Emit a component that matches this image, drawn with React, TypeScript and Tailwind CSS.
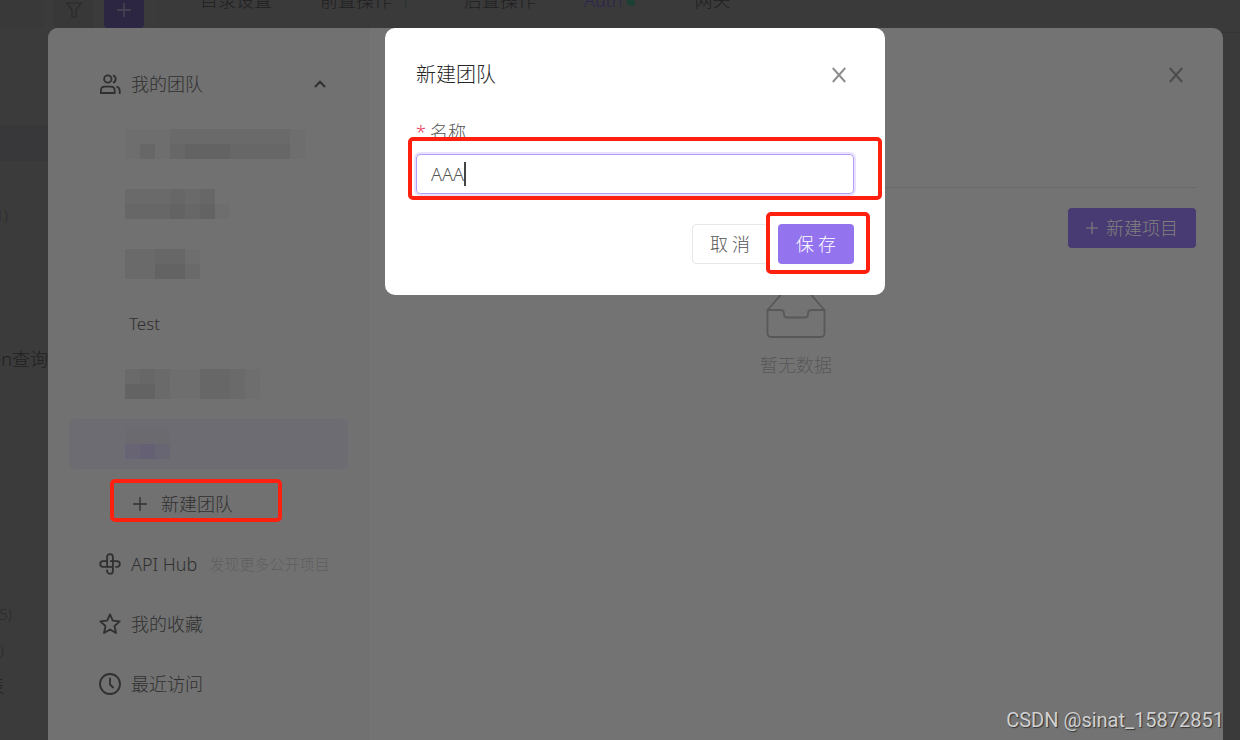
import type { ReactNode } from "react";

const TREE_TOP = ["", "", "(1)", "", "", "", "token查询"];
const TREE_BOTTOM = ["(5)", "(3)", "列表"];

const A = "bg-[#6e6e6e]";
const B = "bg-[#6a6a6a]";
const C = "bg-[#676767]";
const D = "bg-[#636363]";
const N = "bg-transparent";

const MOSAIC_ONE = [
  [A, A, A, B, B, B, B, B, B, B, B, A],
  [A, C, A, C, D, D, D, C, C, C, C, A],
];
const MOSAIC_TWO = [
  [B, B, B, C, B, C, N],
  [C, C, C, D, C, D, A],
];
const MOSAIC_THREE = [
  [B, B, C, C, A],
  [B, B, D, D, B],
];
const MOSAIC_FOUR = [
  [B, C, B, A, A, C, C, B, A],
  [D, D, B, A, A, C, C, B, A],
];
const MOSAIC_ACTIVE = [
  ["bg-[#6b6a6f]", "bg-[#6b6a6f]", "bg-[#6b6a6f]"],
  ["bg-[#686474]", "bg-[#656073]", "bg-[#696674]"],
];

function Mosaic({ rows }: { rows: string[][] }) {
  return (
    <span className="flex flex-col">
      {rows.map((row, y) => (
        <span key={y} className="flex">
          {row.map((tone, x) => (
            <span key={x} className={`size-[15px] ${tone}`} />
          ))}
        </span>
      ))}
    </span>
  );
}

function Cross() {
  return (
    <svg viewBox="0 0 14 16" className="h-4 w-3.5" fill="none" stroke="currentColor" strokeWidth="1.9">
      <path d="M.8 1 13.2 15M13.2 1 .8 15" />
    </svg>
  );
}

function Plus({ className }: { className: string }) {
  return (
    <svg viewBox="0 0 16 16" className={className} fill="none" stroke="currentColor" strokeWidth="1.5">
      <path d="M8 0v16M0 8h16" />
    </svg>
  );
}

function TeamIcon() {
  return (
    <svg viewBox="0 0 22 22" className="size-[22px] shrink-0" fill="none" stroke="currentColor" strokeWidth="1.8">
      <circle cx="8.8" cy="6" r="3.7" />
      <path d="M1.9 20v-2.500c0-2.300 1.600-3.900 3.800-3.900h6.200c2.200 0 3.800 1.600 3.800 3.900V20z" />
      <path d="M14 2.300c1.600.5 2.700 2 2.700 3.700S15.600 9.200 14 9.700M17.400 13.500c2 .5 3.300 2.100 3.300 4.200v3.200" />
    </svg>
  );
}

function HubIcon() {
  return (
    <svg viewBox="0 0 22 22" className="size-[22px] shrink-0" fill="none" stroke="currentColor" strokeWidth="1.8">
      <path d="M8.100 13.800V4.100a2.900 2.900 0 0 1 5.800 0v4.100" />
      <path d="M8.200 8.100H4.100a2.900 2.900 0 0 0 0 5.800h9.700" />
      <path d="M13.900 8.200v9.700a2.900 2.900 0 0 1-5.800 0v-1.500" />
      <path d="M11 8.100h6.900a2.900 2.900 0 0 1 0 5.800h-1.500" />
    </svg>
  );
}

function StarIcon() {
  return (
    <svg viewBox="0 0 22 22" className="size-[22px] shrink-0" fill="none" stroke="currentColor" strokeWidth="1.8" strokeLinejoin="round">
      <path d="m11 1.400 2.800 6.300 6.900.7-5.200 4.600 1.500 7-6-3.600L5 20l1.500-7L1.300 8.400l6.900-.7z" />
    </svg>
  );
}

function ClockIcon() {
  return (
    <svg viewBox="0 0 22 22" className="size-[22px] shrink-0" fill="none" stroke="currentColor" strokeWidth="1.8">
      <circle cx="11" cy="11" r="10" />
      <path d="M11 4.800v6.700l3.600 3.500" />
    </svg>
  );
}

function NavItem({ icon, label, children }: { icon: ReactNode; label: string; children?: ReactNode }) {
  return (
    <li>
      <a href="#" className="flex h-[50px] items-center pr-[22px] pl-[30px]">
        {icon}
        <span className="ml-2.5 whitespace-nowrap">{label}</span>
        {children}
      </a>
    </li>
  );
}

function TeamItem({ active, children }: { active?: boolean; children: ReactNode }) {
  return (
    <li>
      <a
        href="#"
        className={
          active
            ? "flex h-[50px] items-center rounded-md bg-[#6d6c72] pl-14"
            : "flex h-[50px] items-center pl-14"
        }
      >
        {children}
      </a>
    </li>
  );
}

function Backdrop() {
  return (
    <div className="absolute inset-0 flex overflow-hidden bg-[#3a3a3b] text-[#1f1f20]">
      <aside className="w-[158px] shrink-0 bg-[#3b3b3b]">
        <div className="-mt-3 flex h-10 gap-2.5">
          <div className="w-11 rounded-r bg-[#39393a]" />
          <button aria-label="筛选" className="flex w-10 items-center justify-center rounded bg-[#383839] pt-1 text-[#2a2a2a]">
            <svg viewBox="0 0 16 16" className="size-4" fill="none" stroke="currentColor" strokeWidth="1.2">
              <path d="M.8 1h14.400L10 8v7H6V8z" />
            </svg>
          </button>
          <button aria-label="新增" className="flex w-10 items-center justify-center rounded bg-[#2d2643] pt-1 text-[#4a4853]">
            <Plus className="size-3.5" />
          </button>
        </div>
        <ul className="mt-[97px] w-12">
          {TREE_TOP.map((text, i) => (
            <li
              key={i}
              className={
                i === 0
                  ? "h-9 bg-[#38383a]"
                  : i === 2
                    ? "flex h-9 items-center justify-end pr-10 text-[15px] text-[#2a2a2a]"
                    : "flex h-9 items-center justify-end whitespace-nowrap"
              }
            >
              {text}
            </li>
          ))}
        </ul>
        <ul className="mt-[219px] w-12">
          {TREE_BOTTOM.map((text, i) => (
            <li
              key={i}
              className={
                i === 0
                  ? "flex h-9 items-center justify-end pr-9 text-[15px] whitespace-nowrap text-[#2a2a2a]"
                  : i === 1
                    ? "flex h-9 items-center justify-end pr-11 text-[15px] whitespace-nowrap text-[#2a2a2a]"
                    : "flex h-9 items-center justify-end pr-11 whitespace-nowrap"
              }
            >
              {text}
            </li>
          ))}
        </ul>
      </aside>
      <div className="flex-1">
        <nav className="flex h-[33px] gap-12 border-b border-[#363637] pl-[42px] leading-6">
          <a href="#" className="-mt-3">目录设置</a>
          <a href="#" className="-mt-3 flex gap-2">
            前置操作<span className="w-4 text-[#23312c]">1</span>
          </a>
          <a href="#" className="-mt-3">后置操作</a>
          <a href="#" className="-mt-3 flex h-6 items-center gap-1 text-[#2f2450]">
            Auth<span className="mt-1 size-2 rounded-full bg-[#1c4034]" />
          </a>
          <a href="#" className="-mt-3 ml-3">网关</a>
        </nav>
      </div>
    </div>
  );
}

function ProjectPanel() {
  return (
    <div className="absolute inset-0 flex pt-7 pr-[17px] pl-12">
      <div className="flex flex-1 overflow-hidden rounded-t-[10px] bg-[#737373]">
        <aside className="w-[321px] shrink-0 border-r border-[#6f6f6f] bg-[#717171] pt-[31px] pr-5 pl-[21px] text-[#303030]">
          <ul className="flex flex-col gap-2.5">
            <NavItem icon={<TeamIcon />} label="我的团队">
              <svg viewBox="0 0 12 8" className="ml-auto h-2 w-3" fill="none" stroke="currentColor" strokeWidth="2">
                <path d="m1 7 5-5.200L11 7" />
              </svg>
            </NavItem>
            <TeamItem><Mosaic rows={MOSAIC_ONE} /></TeamItem>
            <TeamItem><Mosaic rows={MOSAIC_TWO} /></TeamItem>
            <TeamItem><Mosaic rows={MOSAIC_THREE} /></TeamItem>
            <TeamItem><span className="pl-1 text-[17px]">Test</span></TeamItem>
            <TeamItem><Mosaic rows={MOSAIC_FOUR} /></TeamItem>
            <TeamItem active><Mosaic rows={MOSAIC_ACTIVE} /></TeamItem>
            <li className="relative">
              <button className="flex h-[50px] items-center gap-3.5 pl-16">
                <Plus className="size-3.5" />
                新建团队
              </button>
              <span className="pointer-events-none absolute top-0 left-[41px] h-[43px] w-[172px] rounded-[5px] border-4 border-[#ff2010]" />
            </li>
            <NavItem icon={<HubIcon />} label="API Hub">
              <span className="ml-3 text-[15px] whitespace-nowrap text-[#5f5f5f]">发现更多公开项目</span>
            </NavItem>
            <NavItem icon={<StarIcon />} label="我的收藏" />
            <NavItem icon={<ClockIcon />} label="最近访问" />
          </ul>
        </aside>
        <main className="flex-1 px-[27px]">
          <header className="flex h-40 items-start justify-end border-b border-[#686868] pt-[39px] pr-[13px]">
            <button aria-label="关闭" className="text-[#4b4b4b]">
              <Cross />
            </button>
          </header>
          <div className="mt-5 flex justify-end">
            <button className="flex h-10 items-center gap-2 rounded bg-[#483a72] px-[18px] text-[#82807f]">
              <Plus className="size-3" />
              新建项目
            </button>
          </div>
          <div className="mt-9 flex flex-col items-center text-[#585858]">
            <svg viewBox="0 0 60 56" className="h-14 w-[60px]" fill="none" stroke="currentColor" strokeWidth="1.8">
              <path d="M1.500 26 17 8.500h26L58.500 26" />
              <path d="M1.500 26v23c0 2.500 1.500 4 4 4h49c2.500 0 4-1.500 4-4V26H45.500c-2.500 0-3.500 1.500-3.500 3.700s-1 3.800-3 3.800H21c-2 0-3-1.500-3-3.800s-1-3.700-3.500-3.700z" />
            </svg>
            <p className="mt-[13px]">暂无数据</p>
          </div>
        </main>
      </div>
    </div>
  );
}

function CreateTeamDialog() {
  return (
    <div className="absolute inset-0 flex items-start justify-center pt-7 pr-[18px] pl-12">
      <form
        role="dialog"
        aria-labelledby="dialog-title"
        onSubmit={(e) => e.preventDefault()}
        className="w-[500px] rounded-[10px] bg-white px-[31px] py-[31px] text-[#555555]"
      >
        <div className="flex h-8 items-center justify-between pr-2">
          <h2 id="dialog-title" className="text-[20px] text-[#262626]">新建团队</h2>
          <button type="button" aria-label="关闭" className="text-[#8c8c8c]">
            <Cross />
          </button>
        </div>
        <label htmlFor="team-name" className="mt-[29px] flex h-6 items-center gap-1">
          <span className="text-[#e8365d]">*</span>名称
        </label>
        <div className="relative mt-2.5">
          <input
            id="team-name"
            defaultValue="AAA"
            className="block h-10 w-full rounded border border-[#b39df5] px-3.5 ring-2 ring-[#e9e2fd] outline-none"
          />
          <span className="absolute top-2 left-12 h-6 w-0.5 bg-[#444444]" />
          <span className="pointer-events-none absolute -top-[17px] -right-7 -bottom-1.5 -left-2 rounded-[5px] border-4 border-[#ff2010]" />
        </div>
        <div className="mt-[30px] flex justify-end gap-2.5">
          <button type="button" className="flex h-10 w-[76px] items-center justify-center gap-1 rounded border border-[#e8e8e8]">
            <span>取</span><span>消</span>
          </button>
          <div className="relative">
            <button type="submit" className="flex h-10 w-[76px] items-center justify-center gap-1 rounded bg-[#9373ee] text-white">
              <span>保</span><span>存</span>
            </button>
            <span className="pointer-events-none absolute -top-3 -right-4 -bottom-2.5 -left-3 rounded-[5px] border-4 border-[#ff2010]" />
          </div>
        </div>
      </form>
    </div>
  );
}

export default function App() {
  return (
    <div className="relative h-screen min-h-[740px] overflow-hidden font-['Noto_Sans','Noto_Sans_CJK_SC',sans-serif] text-[18px] leading-6 font-light">
      <Backdrop />
      <ProjectPanel />
      <CreateTeamDialog />
      <p className="absolute right-4 bottom-2 font-[Roboto,sans-serif] text-[20px] font-normal text-[#d0d0d0] [text-shadow:1px_1px_1px_#333]">
        CSDN @sinat_15872851
      </p>
    </div>
  );
}
